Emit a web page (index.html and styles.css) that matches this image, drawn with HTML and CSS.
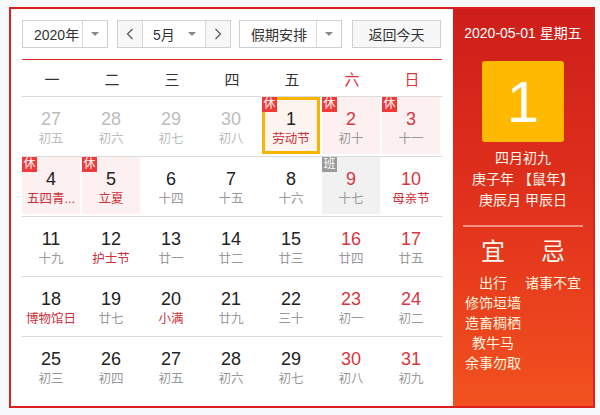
FILE: index.html
```html
<!DOCTYPE html>
<html lang="zh">
<head>
<meta charset="utf-8">
<title>万年历</title>
<link rel="stylesheet" href="styles.css">
</head>
<body>
<div class="cal">
  <div class="main">
    <div class="toolbar">
      <div class="sel year"><span class="val">2020年</span><span class="arr"><i class="tri"></i></span></div>
      <div class="sel month">
        <span class="nav"><svg width="8" height="12" viewBox="0 0 8 12"><polyline points="6.5,1 1.5,6 6.5,11" fill="none" stroke="#555" stroke-width="1.2"/></svg></span>
        <span class="val">5月</span><span class="arr plain"><i class="tri"></i></span>
        <span class="nav"><svg width="8" height="12" viewBox="0 0 8 12"><polyline points="1.5,1 6.5,6 1.5,11" fill="none" stroke="#555" stroke-width="1.2"/></svg></span>
      </div>
      <div class="sel hol"><span class="val">假期安排</span><span class="arr"><i class="tri"></i></span></div>
      <button class="today">返回今天</button>
    </div>
    <div class="week">
      <span>一</span><span>二</span><span>三</span><span>四</span><span>五</span><span class="we">六</span><span class="we">日</span>
    </div>
    <div class="rows">
      <div class="row">
        <div class="cell other"><b class="n">27</b><span class="l">初五</span></div>
        <div class="cell other"><b class="n">28</b><span class="l">初六</span></div>
        <div class="cell other"><b class="n">29</b><span class="l">初七</span></div>
        <div class="cell other"><b class="n">30</b><span class="l">初八</span></div>
        <div class="cell rest cur"><i class="badge">休</i><b class="n">1</b><span class="l fest">劳动节</span></div>
        <div class="cell rest we"><i class="badge">休</i><b class="n">2</b><span class="l">初十</span></div>
        <div class="cell rest we"><i class="badge">休</i><b class="n">3</b><span class="l">十一</span></div>
      </div>
      <div class="row">
        <div class="cell rest"><i class="badge">休</i><b class="n">4</b><span class="l fest">五四青...</span></div>
        <div class="cell rest"><i class="badge">休</i><b class="n">5</b><span class="l fest">立夏</span></div>
        <div class="cell"><b class="n">6</b><span class="l">十四</span></div>
        <div class="cell"><b class="n">7</b><span class="l">十五</span></div>
        <div class="cell"><b class="n">8</b><span class="l">十六</span></div>
        <div class="cell work we"><i class="badge">班</i><b class="n">9</b><span class="l">十七</span></div>
        <div class="cell we"><b class="n">10</b><span class="l fest">母亲节</span></div>
      </div>
      <div class="row">
        <div class="cell"><b class="n">11</b><span class="l">十九</span></div>
        <div class="cell"><b class="n">12</b><span class="l fest">护士节</span></div>
        <div class="cell"><b class="n">13</b><span class="l">廿一</span></div>
        <div class="cell"><b class="n">14</b><span class="l">廿二</span></div>
        <div class="cell"><b class="n">15</b><span class="l">廿三</span></div>
        <div class="cell we"><b class="n">16</b><span class="l">廿四</span></div>
        <div class="cell we"><b class="n">17</b><span class="l">廿五</span></div>
      </div>
      <div class="row">
        <div class="cell"><b class="n">18</b><span class="l fest">博物馆日</span></div>
        <div class="cell"><b class="n">19</b><span class="l">廿七</span></div>
        <div class="cell"><b class="n">20</b><span class="l fest">小满</span></div>
        <div class="cell"><b class="n">21</b><span class="l">廿九</span></div>
        <div class="cell"><b class="n">22</b><span class="l">三十</span></div>
        <div class="cell we"><b class="n">23</b><span class="l">初一</span></div>
        <div class="cell we"><b class="n">24</b><span class="l">初二</span></div>
      </div>
      <div class="row last">
        <div class="cell"><b class="n">25</b><span class="l">初三</span></div>
        <div class="cell"><b class="n">26</b><span class="l">初四</span></div>
        <div class="cell"><b class="n">27</b><span class="l">初五</span></div>
        <div class="cell"><b class="n">28</b><span class="l">初六</span></div>
        <div class="cell"><b class="n">29</b><span class="l">初七</span></div>
        <div class="cell we"><b class="n">30</b><span class="l">初八</span></div>
        <div class="cell we"><b class="n">31</b><span class="l">初九</span></div>
      </div>
    </div>
  </div>
  <div class="side">
    <div class="date">2020-05-01 星期五</div>
    <div class="big">1</div>
    <div class="lunar">
      <div>四月初九</div>
      <div>庚子年 【鼠年】</div>
      <div>庚辰月 甲辰日</div>
    </div>
    <div class="sep"></div>
    <div class="yiji">
      <div class="col">
        <div class="h">宜</div>
        <div class="it">出行</div>
        <div class="it">修饰垣墙</div>
        <div class="it">造畜稠栖</div>
        <div class="it">教牛马</div>
        <div class="it">余事勿取</div>
      </div>
      <div class="col">
        <div class="h">忌</div>
        <div class="it">诸事不宜</div>
      </div>
    </div>
  </div>
</div>
</body>
</html>
```
FILE: styles.css
```css
* { box-sizing: border-box; }
html, body { margin: 0; padding: 0; }
body {
  background: #f5f9f9;
  font-family: "Liberation Sans", "Noto Sans CJK SC", sans-serif;
  padding: 7px 0 0 9px;
}
.cal {
  display: flex;
  width: 586px;
  height: 401px;
  border: 2px solid #dc1f1f;
  background: #fff;
}
.main {
  width: 442px;
  padding: 11px 11px 0 11px;
}
.toolbar {
  display: flex;
  height: 28px;
  font-size: 14px;
  color: #333;
}
.sel {
  display: flex;
  height: 28px;
  border: 1px solid #d0d0d0;
  background: #fff;
}
.sel .val {
  display: flex;
  align-items: center;
  padding-left: 11px;
  flex: 1;
}
.sel .arr {
  width: 25px;
  border-left: 1px solid #d8d8d8;
  display: flex;
  align-items: center;
  justify-content: center;
}
.sel .arr.plain { border-left: none; width: 26px; }
.tri {
  display: block;
  width: 0;
  height: 0;
  border-left: 4px solid transparent;
  border-right: 4px solid transparent;
  border-top: 4px solid #888;
}
.year { width: 86px; margin-right: 9px; }
.month { width: 114px; margin-right: 8px; }
.month .val { padding-left: 10px; }
.nav {
  width: 25px;
  display: flex;
  align-items: center;
  justify-content: center;
  background: #f7f7f7;
}
.nav:first-child { border-right: 1px solid #d8d8d8; }
.nav:last-child { border-left: 1px solid #d8d8d8; }
.hol { width: 103px; margin-right: 10px; }
.today {
  width: 89px;
  height: 28px;
  border: 1px solid #d0d0d0;
  background: #f7f7f7;
  font: inherit;
  font-size: 14px;
  color: #333;
  padding: 0;
}
.week {
  margin-top: 11px;
  display: grid;
  grid-template-columns: repeat(7, 60px);
  height: 38px;
  border-top: 1px solid #dc2a2a;
  border-bottom: 1px solid #dcdcdc;
  font-size: 15px;
  color: #333;
}
.week span {
  display: flex;
  align-items: center;
  justify-content: center;
}
.week .we { color: #d9363e; }
.row {
  display: grid;
  grid-template-columns: repeat(7, 60px);
  height: 60px;
  border-bottom: 1px solid #dcdcdc;
}
.row.last { border-bottom: none; }
.cell {
  position: relative;
  width: 58px;
  height: 57px;
  display: flex;
  flex-direction: column;
  align-items: center;
  padding-top: 11px;
}
.cell .n {
  font-weight: normal;
  font-size: 18px;
  line-height: 22px;
  color: #222;
}
.cell .l {
  font-size: 12.5px;
  line-height: 18px;
  color: #999;
  white-space: nowrap;
}
.cell .l.fest { color: #cc2f38; }
.cell.we .n { color: #d9363e; }
.cell.other .n, .cell.other .l { color: #bcbcbc; }
.cell.rest { background: #fdf0f0; }
.cell.work { background: #f1f1f1; }
.cell.cur { box-shadow: inset 0 0 0 3px #f7b500; background: #fdf3ef; }
.badge {
  position: absolute;
  left: 0;
  top: 0;
  width: 15px;
  height: 15px;
  font-style: normal;
  font-size: 12px;
  line-height: 15px;
  text-align: center;
  color: #fff;
  background: #f03a3a;
}
.work .badge { background: #9a9a9a; }
.side {
  width: 140px;
  background: linear-gradient(#cd1e1a, #e3341d 55%, #f2521f);
  color: #fff;
  display: flex;
  flex-direction: column;
  align-items: center;
  padding-top: 14px;
}
.date {
  font-size: 14px;
  line-height: 20px;
}
.big {
  margin-top: 18px;
  width: 82px;
  height: 81px;
  border-radius: 3px;
  background: #ffb900;
  font-size: 58px;
  line-height: 81px;
  text-align: center;
  color: #fff;
}
.lunar {
  margin-top: 6px;
  font-size: 14px;
  line-height: 21px;
  text-align: center;
  color: #fff6e8;
}
.sep {
  margin-top: 14px;
  width: 120px;
  height: 2px;
  background: rgba(255, 220, 210, 0.55);
}
.yiji {
  margin-top: 10px;
  display: grid;
  grid-template-columns: 60px 60px;
}
.col {
  display: flex;
  flex-direction: column;
  align-items: center;
}
.col .h {
  font-size: 24px;
  line-height: 30px;
  margin-bottom: 6px;
  color: #fff8ee;
}
.col .it {
  font-size: 14px;
  line-height: 20px;
  white-space: nowrap;
  color: #fff2dc;
}
```
